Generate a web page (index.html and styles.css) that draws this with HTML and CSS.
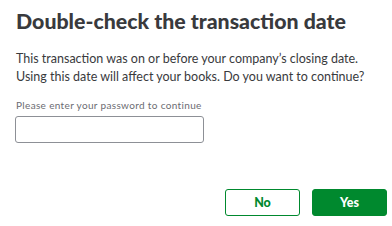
FILE: index.html
```html
<!DOCTYPE html>
<html>
<head>
<meta charset="utf-8">
<link rel="stylesheet" href="styles.css">
</head>
<body>
<div class="dialog">
  <h1 class="title">Double-check the transaction date</h1>
  <p class="message">This transaction was on or before your company’s closing date.<br>Using this date will affect your books. Do you want to continue?</p>
  <label class="label" for="pw">Please enter your password to continue</label>
  <input class="input" id="pw" type="password">
  <div class="actions">
    <button class="btn btn-secondary">No</button>
    <button class="btn btn-primary">Yes</button>
  </div>
</div>
</body>
</html>
```
FILE: styles.css
```css
html, body {
  margin: 0;
  padding: 0;
  background: #fff;
}
.dialog {
  width: 392px;
  height: 226px;
  box-sizing: border-box;
  padding: 7px 5px 0 16px;
  display: flex;
  flex-direction: column;
  font-family: "Lato", sans-serif;
  color: #393a3d;
}
.title {
  margin: 0;
  font-size: 21.3px;
  line-height: 28px;
  font-weight: 900;
  color: #393a3d;
}
.message {
  margin: 15px 0 0;
  font-size: 12.5px;
  line-height: 18px;
  color: #393a3d;
}
.label {
  margin-top: 12px;
  font-size: 10px;
  line-height: 14px;
  letter-spacing: 0.34px;
  color: #6b6c72;
}
.input {
  margin: 4px 0 0 -1px;
  width: 189px;
  height: 27px;
  box-sizing: border-box;
  border: 1px solid #8d9096;
  border-radius: 3px;
  padding: 0 8px;
}
.actions {
  margin-top: 46px;
  display: flex;
  justify-content: flex-end;
  gap: 12px;
}
.btn {
  width: 75px;
  height: 27px;
  box-sizing: border-box;
  border-radius: 3px;
  font-family: "Lato", sans-serif;
  font-size: 12.5px;
  font-weight: 900;
  cursor: pointer;
}
.btn-secondary {
  background: #fff;
  border: 1px solid #00892e;
  color: #00892e;
}
.btn-primary {
  background: #00892e;
  border: 1px solid #00892e;
  color: #fff;
}
```
